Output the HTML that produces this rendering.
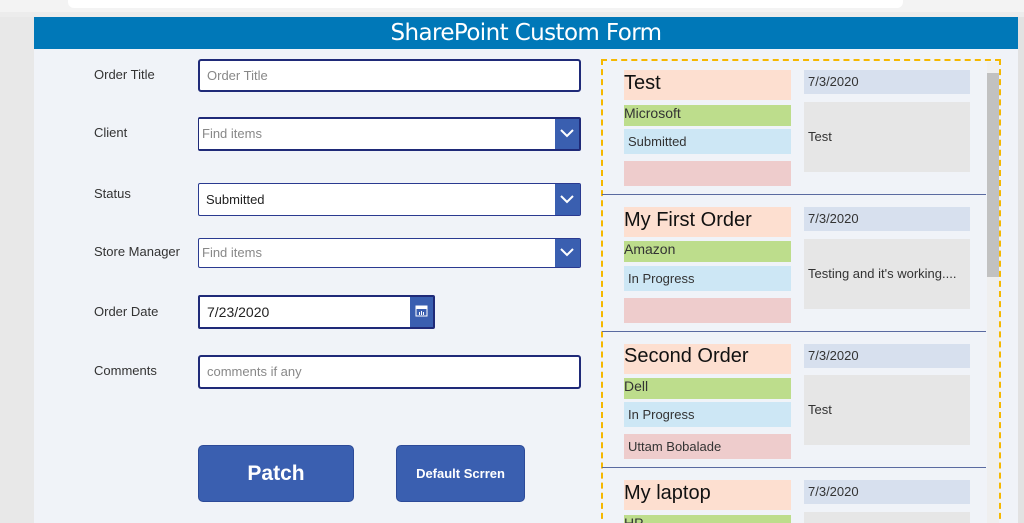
<!DOCTYPE html>
<html style="overflow:hidden;height:523px"><head><style>
*{margin:0;padding:0;box-sizing:border-box}
body{width:1024px;height:523px;overflow:hidden;background:#e8e8e8;font-family:"Liberation Sans","DejaVu Sans",sans-serif;position:relative}
#w{position:absolute;left:0;top:0;width:1024px;height:523px;overflow:hidden}
.a{position:absolute}
.lbl{font-size:13px;color:#333}
.in{background:#fff;border:2px solid #1f2a78;border-radius:2px}
.ph{font-size:13px;color:#888;padding-left:7px}
.dd{background:#3a5fb0}
.t{font-size:13px;color:#333;white-space:nowrap;overflow:hidden}
</style></head><body><div id="w">
<div class="a" style="left:0;top:0;width:1024px;height:12px;background:#f3f3f3"></div>
<div class="a" style="left:68px;top:0;width:835px;height:8px;background:#fff;border-radius:0 0 6px 6px"></div>
<div class="a" style="left:0;top:12px;width:1024px;height:5px;background:#ececec"></div>
<div class="a" style="left:34px;top:17px;width:984px;height:506px;background:#f0f3f8"></div>
<div class="a" style="left:34px;top:17px;width:984px;height:32px;background:#0078b8;color:#fff;font-size:23px;text-align:center;line-height:32px;font-family:'DejaVu Sans',sans-serif;letter-spacing:-0.6px">SharePoint Custom Form</div>

<div class="a lbl" style="left:94px;top:67px">Order Title</div>
<div class="a lbl" style="left:94px;top:125px">Client</div>
<div class="a lbl" style="left:94px;top:186px">Status</div>
<div class="a lbl" style="left:94px;top:244px">Store Manager</div>
<div class="a lbl" style="left:94px;top:304px">Order Date</div>
<div class="a lbl" style="left:94px;top:363px">Comments</div>

<div class="a in" style="left:198px;top:59px;width:383px;height:33px;border-radius:3px"><div class="ph" style="line-height:29px">Order Title</div></div>
<div class="a in" style="left:198px;top:117px;width:383px;height:34px;border-left-width:1px"><div class="ph" style="line-height:30px;padding-left:3px">Find items</div><div class="a dd" style="right:0;top:0;width:24px;height:30px"></div></div>
<div class="a in" style="left:198px;top:183px;width:383px;height:33px;border-width:1px;border-color:#2a3a90"><div class="ph" style="line-height:31px;color:#222">Submitted</div><div class="a dd" style="right:0;top:0;width:25px;height:31px"></div></div>
<div class="a in" style="left:198px;top:238px;width:383px;height:30px;border-width:1px;border-color:#2a3a90"><div class="ph" style="line-height:28px;padding-left:3px">Find items</div><div class="a dd" style="right:0;top:0;width:25px;height:28px"></div></div>
<svg class="a" style="left:559px;top:127px" width="16" height="14"><path d="M2 3 L8 9 L14 3" fill="none" stroke="#fff" stroke-width="2"/></svg>
<svg class="a" style="left:559px;top:193px" width="16" height="14"><path d="M2 3 L8 9 L14 3" fill="none" stroke="#fff" stroke-width="2"/></svg>
<svg class="a" style="left:559px;top:246px" width="16" height="14"><path d="M2 3 L8 9 L14 3" fill="none" stroke="#fff" stroke-width="2"/></svg>
<div class="a in" style="left:198px;top:295px;width:237px;height:34px"><div class="ph" style="line-height:30px;color:#222;font-size:14px">7/23/2020</div><div class="a dd" style="right:0;top:0;width:23px;height:30px"></div></div>
<svg class="a" style="left:415px;top:305px" width="13" height="12"><rect x="1" y="1" width="11" height="10" fill="none" stroke="#fff" stroke-width="1"/><rect x="1" y="1" width="11" height="3" fill="#fff"/><rect x="4" y="7" width="1" height="3" fill="#fff"/><rect x="6" y="6" width="1" height="4" fill="#fff"/><rect x="8" y="7" width="1" height="3" fill="#fff"/></svg>
<div class="a in" style="left:198px;top:355px;width:383px;height:34px;border-radius:3px"><div class="ph" style="line-height:30px">comments if any</div></div>

<div class="a" style="left:198px;top:445px;width:156px;height:57px;background:#3a5fb0;border:1px solid #2c4a98;border-radius:5px;color:#fff;font-weight:bold;font-size:21px;text-align:center;line-height:55px">Patch</div>
<div class="a" style="left:396px;top:445px;width:129px;height:57px;background:#3a5fb0;border:1px solid #2c4a98;border-radius:5px;color:#fff;font-weight:bold;font-size:13px;text-align:center;line-height:55px">Default Scrren</div>

<div class="a" style="left:601px;top:59px;width:400px;height:470px;border:2px dashed #f5b800"></div>
<div class="a" style="left:987px;top:62px;width:12px;height:461px;background:#efefef"></div>
<div class="a" style="left:987px;top:73px;width:12px;height:204px;background:#c1c1c1"></div>
<div class="a" style="left:1018px;top:17px;width:6px;height:506px;background:#e2e2e2"></div>

<div class="a" style="left:602px;top:194px;width:384px;height:1px;background:#5a6aa0"></div>
<div class="a" style="left:602px;top:331px;width:384px;height:1px;background:#5a6aa0"></div>
<div class="a" style="left:602px;top:467px;width:384px;height:1px;background:#5a6aa0"></div>

<div class="a t" style="left:624px;top:70px;width:167px;height:30px;background:#fddfd0;font-size:20px;color:#111;line-height:26px">Test</div>
<div class="a t" style="left:624px;top:105px;width:167px;height:21px;background:#bddd8c;font-size:14px;line-height:17px">Microsoft</div>
<div class="a t" style="left:624px;top:129px;width:167px;height:25px;background:#cde7f5;padding-left:4px;line-height:25px">Submitted</div>
<div class="a" style="left:624px;top:161px;width:167px;height:25px;background:#eecccc"></div>
<div class="a t" style="left:804px;top:70px;width:166px;height:24px;background:#d7e0ee;padding-left:4px;line-height:24px">7/3/2020</div>
<div class="a t" style="left:804px;top:102px;width:166px;height:70px;background:#e6e6e6;padding-left:4px;line-height:70px">Test</div>

<div class="a t" style="left:624px;top:207px;width:167px;height:30px;background:#fddfd0;font-size:20px;color:#111;line-height:26px">My First Order</div>
<div class="a t" style="left:624px;top:241px;width:167px;height:21px;background:#bddd8c;font-size:14px;line-height:17px">Amazon</div>
<div class="a t" style="left:624px;top:266px;width:167px;height:25px;background:#cde7f5;padding-left:4px;line-height:25px">In Progress</div>
<div class="a" style="left:624px;top:298px;width:167px;height:25px;background:#eecccc"></div>
<div class="a t" style="left:804px;top:207px;width:166px;height:24px;background:#d7e0ee;padding-left:4px;line-height:24px">7/3/2020</div>
<div class="a t" style="left:804px;top:239px;width:166px;height:70px;background:#e6e6e6;padding-left:4px;line-height:70px">Testing and it's working....</div>

<div class="a t" style="left:624px;top:344px;width:167px;height:30px;background:#fddfd0;font-size:20px;color:#111;line-height:24px">Second Order</div>
<div class="a t" style="left:624px;top:378px;width:167px;height:21px;background:#bddd8c;font-size:14px;line-height:17px">Dell</div>
<div class="a t" style="left:624px;top:402px;width:167px;height:25px;background:#cde7f5;padding-left:4px;line-height:25px">In Progress</div>
<div class="a t" style="left:624px;top:434px;width:167px;height:25px;background:#eecccc;padding-left:4px;line-height:25px">Uttam Bobalade</div>
<div class="a t" style="left:804px;top:344px;width:166px;height:24px;background:#d7e0ee;padding-left:4px;line-height:24px">7/3/2020</div>
<div class="a t" style="left:804px;top:375px;width:166px;height:70px;background:#e6e6e6;padding-left:4px;line-height:70px">Test</div>

<div class="a t" style="left:624px;top:480px;width:167px;height:30px;background:#fddfd0;font-size:20px;color:#111;line-height:26px">My laptop</div>
<div class="a t" style="left:624px;top:515px;width:167px;height:21px;background:#bddd8c;font-size:14px;line-height:17px">HP</div>
<div class="a t" style="left:804px;top:480px;width:166px;height:24px;background:#d7e0ee;padding-left:4px;line-height:24px">7/3/2020</div>
<div class="a" style="left:804px;top:512px;width:166px;height:20px;background:#e6e6e6"></div>
</div></body></html>
